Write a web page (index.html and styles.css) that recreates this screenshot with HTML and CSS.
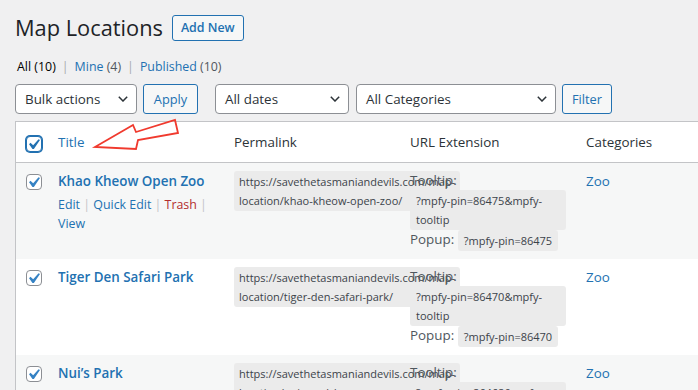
FILE: index.html
```html
<!DOCTYPE html>
<html lang="en">
<head>
    <meta charset="UTF-8">
    <meta name="viewport" content="width=device-width, initial-scale=1.0">
    <title>Map Locations</title>
    <link rel="stylesheet" href="styles.css">
</head>
<body>
    <div class="wrap">
        <!-- page title -->
        <div class="page-head">
            <h1>Map Locations</h1>
            <a class="add-new" href="#">Add New</a>
        </div>

        <!-- view filters -->
        <ul class="views">
            <li class="current">All <span class="count">(10)</span></li>
            <li class="sep">|</li>
            <li><a href="#">Mine</a> <span class="count">(4)</span></li>
            <li class="sep">|</li>
            <li><a href="#">Published</a> <span class="count">(10)</span></li>
        </ul>

        <!-- bulk actions + filters -->
        <div class="filters">
            <div class="select bulk">Bulk actions <svg class="chev" viewBox="0 0 10 6"><polyline points="0.8,0.8 5,5 9.2,0.8"/></svg></div>
            <button class="btn apply">Apply</button>
            <div class="select dates">All dates <svg class="chev" viewBox="0 0 10 6"><polyline points="0.8,0.8 5,5 9.2,0.8"/></svg></div>
            <div class="select cats">All Categories <svg class="chev" viewBox="0 0 10 6"><polyline points="0.8,0.8 5,5 9.2,0.8"/></svg></div>
            <button class="btn filter">Filter</button>
        </div>

        <div class="table-wrap">
            <table class="list">
                <colgroup>
                    <col class="c-cb">
                    <col class="c-col">
                    <col class="c-col">
                    <col class="c-col">
                    <col class="c-col">
                    <col class="c-date">
                </colgroup>
                <thead>
                    <tr>
                        <th class="check"><span class="cb head"><svg viewBox="0 0 20 20"><path d="M14.83 4.89l1.34.94-5.81 8.38H9.02L5.78 9.67l1.34-1.25 2.57 2.4z"/></svg></span></th>
                        <th class="sortable"><a href="#">Title</a></th>
                        <th>Permalink</th>
                        <th>URL Extension</th>
                        <th>Categories</th>
                        <th>Date</th>
                    </tr>
                </thead>
                <tbody>
                    <tr class="alt">
                        <td class="check"><span class="cb"><svg viewBox="0 0 20 20"><path d="M14.83 4.89l1.34.94-5.81 8.38H9.02L5.78 9.67l1.34-1.25 2.57 2.4z"/></svg></span></td>
                        <td>
                            <a class="row-title" href="#">Khao Kheow Open Zoo</a>
                            <div class="row-actions">
                                <a href="#">Edit</a> <span class="sep">|</span>
                                <a href="#">Quick Edit</a> <span class="sep">|</span>
                                <a class="trash" href="#">Trash</a> <span class="sep">|</span>
                                <a href="#">View</a>
                            </div>
                        </td>
                        <td><code class="link">https://savethetasmaniandevils.com/map-location/khao-kheow-open-zoo/</code></td>
                        <td class="ext">
                            <div>Tooltip: <code>?mpfy-pin=86475&amp;mpfy-tooltip</code></div>
                            <div>Popup: <code>?mpfy-pin=86475</code></div>
                        </td>
                        <td><a href="#">Zoo</a></td>
                        <td></td>
                    </tr>
                    <tr>
                        <td class="check"><span class="cb"><svg viewBox="0 0 20 20"><path d="M14.83 4.89l1.34.94-5.81 8.38H9.02L5.78 9.67l1.34-1.25 2.57 2.4z"/></svg></span></td>
                        <td><a class="row-title" href="#">Tiger Den Safari Park</a></td>
                        <td><code class="link">https://savethetasmaniandevils.com/map-location/tiger-den-safari-park/</code></td>
                        <td class="ext">
                            <div>Tooltip: <code>?mpfy-pin=86470&amp;mpfy-tooltip</code></div>
                            <div>Popup: <code>?mpfy-pin=86470</code></div>
                        </td>
                        <td><a href="#">Zoo</a></td>
                        <td></td>
                    </tr>
                    <tr class="alt">
                        <td class="check"><span class="cb"><svg viewBox="0 0 20 20"><path d="M14.83 4.89l1.34.94-5.81 8.38H9.02L5.78 9.67l1.34-1.25 2.57 2.4z"/></svg></span></td>
                        <td><a class="row-title" href="#">Nui’s Park</a></td>
                        <td><code class="link">https://savethetasmaniandevils.com/map-location/nuis-park/</code></td>
                        <td class="ext">
                            <div>Tooltip: <code>?mpfy-pin=86468&amp;mpfy-tooltip</code></div>
                            <div>Popup: <code>?mpfy-pin=86468</code></div>
                        </td>
                        <td><a href="#">Zoo</a></td>
                        <td></td>
                    </tr>
                </tbody>
            </table>

            <!-- red pointer drawn over the header -->
            <svg class="pointer" viewBox="0 0 200 40">
                <polygon points="80,26 118,4 121,11 160,-1 163,12 123,19 121,28"/>
            </svg>
        </div>
    </div>
</body>
</html>
```

FILE: styles.css
```css
html, body {
    overflow: hidden;
}

body {
    margin: 0;
    background-color: #f0f0f1;
    font-family: "Open Sans", "Noto Sans", sans-serif;
    font-size: 12.4px;
    color: #3c434a;
}

a {
    color: #2271b1;
    text-decoration: none;
}

.wrap {
    padding: 13px 0 0 15px;
}

/* title row */
.page-head {
    display: flex;
    align-items: center;
    gap: 9px;
    height: 30px;
}

.page-head h1 {
    margin: 0;
    font-size: 21.8px;
    font-weight: 400;
    line-height: 30px;
    color: #1d2327;
}

.add-new {
    height: 26px;
    box-sizing: border-box;
    padding: 0 8px;
    border: 1px solid #2271b1;
    border-radius: 3px;
    background-color: #f6f7f7;
    font-size: 12.4px;
    font-weight: 600;
    line-height: 24px;
}

/* All | Mine | Published */
.views {
    list-style: none;
    margin: 14px 0 0;
    padding: 0 0 0 2px;
    display: flex;
    gap: 6px;
    line-height: 20px;
    color: #50575e;
}

.views .current {
    color: #000;
}

.views .sep {
    color: #a7aaad;
}

/* filter bar */
.filters {
    display: flex;
    margin-top: 7px;
    height: 30px;
}

.select {
    display: flex;
    align-items: center;
    justify-content: space-between;
    box-sizing: border-box;
    height: 30px;
    padding: 0 8px 0 9px;
    border: 1px solid #8c8f94;
    border-radius: 4px;
    background-color: #fff;
    font-size: 13.4px;
    color: #2c3338;
}

.chev {
    width: 10px;
    height: 6px;
    fill: none;
    stroke: #2c3338;
    stroke-width: 1.5;
}

.bulk {
    width: 122px;
}

.dates {
    width: 134px;
    margin-left: 17px;
}

.cats {
    width: 200px;
    margin-left: 7px;
}

.btn {
    height: 30px;
    padding: 0;
    margin-left: 6px;
    border: 1px solid #2271b1;
    border-radius: 3px;
    background-color: #f6f7f7;
    color: #2271b1;
    font-family: inherit;
    font-size: 12.8px;
}

.apply {
    width: 55px;
}

.filter {
    width: 50px;
}

/* list table */
.table-wrap {
    position: relative;
    margin-top: 7px;
}

.list {
    width: 890px;
    table-layout: fixed;
    border-collapse: separate;
    border-spacing: 0;
    border: 1px solid #c3c4c7;
    background-color: #fff;
}

.c-cb {
    width: 34px;
}

.c-col {
    width: 176px;
}

.c-date {
    width: 150px;
}

.list th {
    padding: 8px;
    border-bottom: 1px solid #c3c4c7;
    font-size: 13.4px;
    font-weight: 400;
    line-height: 24px;
    text-align: left;
    color: #2c3338;
}

.list td {
    padding: 8px;
    vertical-align: top;
    font-size: 13.4px;
    line-height: 20px;
    overflow: visible;
}

.list tr.alt td {
    background-color: #f6f7f7;
}

.list .check {
    padding-left: 10px;
    padding-right: 0;
}

/* checkboxes */
.cb {
    position: relative;
    display: block;
    width: 16px;
    height: 16px;
    box-sizing: border-box;
    margin-top: 3px;
    border: 1px solid #8c8f94;
    border-radius: 4px;
    background-color: #fff;
}

.cb svg {
    position: absolute;
    top: -3px;
    left: -4px;
    width: 21px;
    height: 21px;
    fill: #3582c4;
}

.cb.head {
    margin-top: 4px;
    border-color: #2271b1;
    box-shadow: 0 0 0 1px #2271b1;
}

.cb.head svg {
    fill: #2271b1;
}

/* title column */
.row-title {
    font-weight: 600;
}

.row-actions {
    padding-top: 4px;
    font-size: 12.4px;
    line-height: 19px;
    padding-right: 4px;
}

.row-actions .sep {
    color: #c3c4c7;
}

.row-actions .trash {
    color: #b32d2e;
}

/* code chips */
.list code {
    display: inline-block;
    vertical-align: top;
    padding: 1px 6px;
    border-radius: 3px;
    background-color: #ebebeb;
    font-family: inherit;
    font-size: 11px;
    line-height: 19px;
    color: #3c434a;
}

.list code.link {
    padding: 1px 5px;
}

.ext {
    color: #50575e;
}

.list td.ext {
    line-height: 19px;
    padding-right: 12px;
}

/* red arrow annotation */
.pointer {
    position: absolute;
    left: 0;
    top: 0;
    width: 200px;
    height: 40px;
    overflow: visible;
    fill: none;
    stroke: #f03a2e;
    stroke-width: 1.8;
    stroke-linejoin: miter;
}
```
